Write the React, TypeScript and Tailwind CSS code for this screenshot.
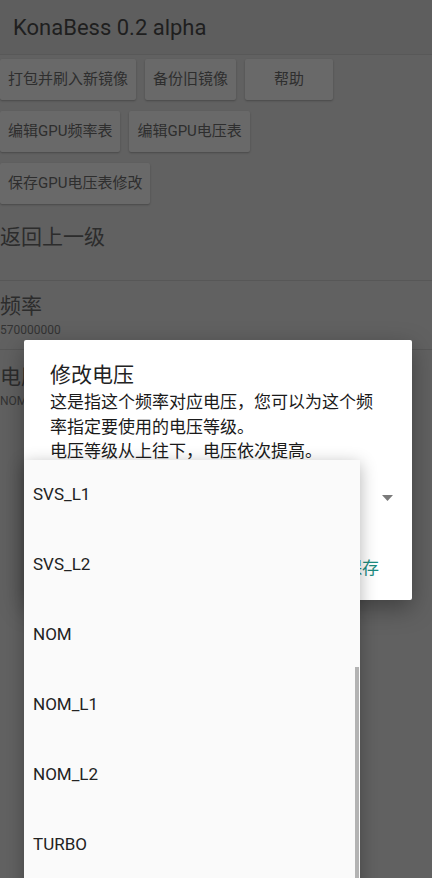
import React from 'react';

const levels = ['SVS_L1', 'SVS_L2', 'NOM', 'NOM_L1', 'NOM_L2', 'TURBO'];

const ToolButton: React.FC<{ label: string; wide?: boolean }> = ({ label, wide }) => (
    <div
        className={`h-[41px] ${wide ? 'min-w-[88px]' : ''} px-[8px] flex items-center justify-center bg-[#696969] rounded-[2px] shadow-[0_1px_2px_rgba(0,0,0,0.25)] text-[15px] text-[#2e2e2e]`}
    >
        {label}
    </div>
);

const App: React.FC = () => {
    return (
        <div
            className="relative w-[432px] h-[878px] overflow-hidden bg-[#616161]"
            style={{ fontFamily: 'Roboto, "Noto Sans CJK SC", sans-serif' }}
        >
            {/* toolbar */}
            <div className="h-[55px] px-[13px] flex items-center bg-[#5e5e5e] border-b border-[#585858]">
                <span className="text-[22px] text-[#1f1f1f]">KonaBess 0.2 alpha</span>
            </div>

            {/* action buttons */}
            <div className="flex flex-col gap-[11px] pt-[4px]">
                <div className="flex gap-[9px]">
                    <ToolButton label="打包并刷入新镜像" />
                    <ToolButton label="备份旧镜像" />
                    <ToolButton label="帮助" wide />
                </div>
                <div className="flex gap-[9px]">
                    <ToolButton label="编辑GPU频率表" />
                    <ToolButton label="编辑GPU电压表" />
                </div>
                <div className="flex gap-[9px]">
                    <ToolButton label="保存GPU电压表修改" />
                </div>
            </div>

            {/* level list */}
            <div className="mt-[1px]">
                <div className="h-[76px] pt-[18px] border-b border-[#575757]">
                    <div className="text-[21px] leading-[28px] text-[#2c2c2c]">返回上一级</div>
                </div>
                <div className="h-[69px] pt-[12px] border-b border-[#575757]">
                    <div className="text-[21px] leading-[26px] text-[#2c2c2c]">频率</div>
                    <div className="mt-[3px] text-[12px] leading-[16px] text-[#333]">570000000</div>
                </div>
                <div className="h-[69px] pt-[14px]">
                    <div className="text-[21px] leading-[26px] text-[#2c2c2c]">电压</div>
                    <div className="mt-[3px] text-[12px] leading-[16px] text-[#333]">NOM</div>
                </div>
            </div>

            {/* edit voltage dialog */}
            <div className="absolute left-[24px] top-[340px] w-[388px] h-[260px] bg-white rounded-[2px] shadow-[0_8px_24px_rgba(0,0,0,0.35)] pt-[21px] px-[26px]">
                <div className="text-[21px] leading-[28px] text-[#222]">修改电压</div>
                <div className="text-[17px] leading-[24.5px] text-[#1a1a1a] mt-[1px]">
                    <div>这是指这个频率对应电压，您可以为这个频</div>
                    <div>率指定要使用的电压等级。</div>
                    <div>电压等级从上往下，电压依次提高。</div>
                </div>
                <svg className="absolute left-[358px] top-[155px]" width="11" height="6" viewBox="0 0 11 6">
                    <path d="M0 0 L11 0 L5.5 6 Z" fill="#7a7a7a" />
                </svg>
                <div className="absolute left-[321px] top-[216px] text-[17px] leading-[24px] text-[#1d8b7f]">保存</div>
            </div>

            {/* spinner popup */}
            <div className="absolute left-[24px] top-[460px] w-[336px] h-[430px] bg-[#fafafa] shadow-[0_4px_16px_rgba(0,0,0,0.3)]">
                {levels.map((lv) => (
                    <div key={lv} className="h-[70px] pl-[9px] flex items-center text-[17px] text-[#222]">
                        {lv}
                    </div>
                ))}
                <div className="absolute right-[1px] top-[207px] w-[4px] h-[223px] bg-[#b3b3b3]" />
            </div>
        </div>
    );
};

export default App;
